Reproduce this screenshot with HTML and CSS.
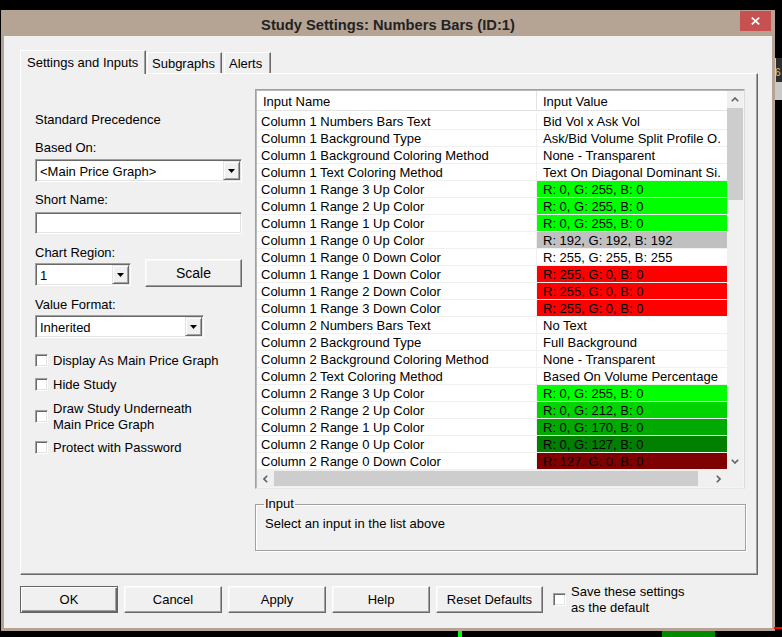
FILE: index.html
```html
<!DOCTYPE html>
<html lang="en">
<head>
<meta charset="utf-8">
<title>Study Settings: Numbers Bars (ID:1)</title>
<link rel="stylesheet" href="styles.css">
</head>
<body>
<div class="chart-bit chart-bit-dark">6</div>
<div class="chart-bit chart-bit-light"></div>
<div class="chart-bit chart-bar-green"></div>
<div class="chart-bit chart-bar-dkgreen"></div>
<div class="chart-bit chart-line-red"></div>

<div class="dialog">
  <div class="titlebar">
    <div class="title">Study Settings: Numbers Bars (ID:1)</div>
    <div class="close"><svg width="9" height="8" viewBox="0 0 9 8"><path d="M0.8 0.6 L8.2 7.4 M8.2 0.6 L0.8 7.4" stroke="#fff" stroke-width="1.7" fill="none"/></svg></div>
  </div>
  <div class="client">
    <div class="tabs">
      <div class="tab tab-active">Settings and Inputs</div>
      <div class="tab tab-sub">Subgraphs</div>
      <div class="tab tab-alerts">Alerts</div>
    </div>
    <div class="panel">
      <div class="leftcol">
        <div class="lbl">Standard Precedence</div>
        <div class="lbl mt12">Based On:</div>
        <div class="combo combo-based mt4"><span class="combo-text">&lt;Main Price Graph&gt;</span><span class="dd"><svg width="7" height="4" viewBox="0 0 7 4"><path d="M0 0H7L3.5 4Z" fill="#000"/></svg></span></div>
        <div class="lbl mt9">Short Name:</div>
        <div class="textbox mt5"></div>
        <div class="lbl mt10">Chart Region:</div>
        <div class="region-row">
          <div class="combo combo-region"><span class="combo-text">1</span><span class="dd"><svg width="7" height="4" viewBox="0 0 7 4"><path d="M0 0H7L3.5 4Z" fill="#000"/></svg></span></div>
          <div class="btn btn-scale">Scale</div>
        </div>
        <div class="lbl mt9">Value Format:</div>
        <div class="combo combo-format mt3"><span class="combo-text">Inherited</span><span class="dd"><svg width="7" height="4" viewBox="0 0 7 4"><path d="M0 0H7L3.5 4Z" fill="#000"/></svg></span></div>
        <div class="check mt14"><span class="box"></span><span class="ctext">Display As Main Price Graph</span></div>
        <div class="check mt8"><span class="box"></span><span class="ctext">Hide Study</span></div>
        <div class="check mt8"><span class="box"></span><span class="ctext">Draw Study Underneath<br>Main Price Graph</span></div>
        <div class="check mt7"><span class="box"></span><span class="ctext">Protect with Password</span></div>
      </div>
      <div class="rightcol">
        <div class="listview">
          <div class="lv-main">
            <div class="lv-head"><span class="hn">Input Name</span><span class="hv">Input Value</span></div>
            <div class="lv-rows">
              <div class="row"><span class="n">Column 1 Numbers Bars Text</span><span class="v">Bid Vol x Ask Vol</span></div>
              <div class="row"><span class="n">Column 1 Background Type</span><span class="v">Ask/Bid Volume Split Profile O.</span></div>
              <div class="row"><span class="n">Column 1 Background Coloring Method</span><span class="v">None - Transparent</span></div>
              <div class="row"><span class="n">Column 1 Text Coloring Method</span><span class="v">Text On Diagonal Dominant Si.</span></div>
              <div class="row"><span class="n">Column 1 Range 3 Up Color</span><span class="v c-g255">R: 0, G: 255, B: 0</span></div>
              <div class="row"><span class="n">Column 1 Range 2 Up Color</span><span class="v c-g255">R: 0, G: 255, B: 0</span></div>
              <div class="row"><span class="n">Column 1 Range 1 Up Color</span><span class="v c-g255">R: 0, G: 255, B: 0</span></div>
              <div class="row"><span class="n">Column 1 Range 0 Up Color</span><span class="v c-gray">R: 192, G: 192, B: 192</span></div>
              <div class="row"><span class="n">Column 1 Range 0 Down Color</span><span class="v">R: 255, G: 255, B: 255</span></div>
              <div class="row"><span class="n">Column 1 Range 1 Down Color</span><span class="v c-red">R: 255, G: 0, B: 0</span></div>
              <div class="row"><span class="n">Column 1 Range 2 Down Color</span><span class="v c-red">R: 255, G: 0, B: 0</span></div>
              <div class="row"><span class="n">Column 1 Range 3 Down Color</span><span class="v c-red">R: 255, G: 0, B: 0</span></div>
              <div class="row"><span class="n">Column 2 Numbers Bars Text</span><span class="v">No Text</span></div>
              <div class="row"><span class="n">Column 2 Background Type</span><span class="v">Full Background</span></div>
              <div class="row"><span class="n">Column 2 Background Coloring Method</span><span class="v">None - Transparent</span></div>
              <div class="row"><span class="n">Column 2 Text Coloring Method</span><span class="v">Based On Volume Percentage</span></div>
              <div class="row"><span class="n">Column 2 Range 3 Up Color</span><span class="v c-g255">R: 0, G: 255, B: 0</span></div>
              <div class="row"><span class="n">Column 2 Range 2 Up Color</span><span class="v c-g212">R: 0, G: 212, B: 0</span></div>
              <div class="row"><span class="n">Column 2 Range 1 Up Color</span><span class="v c-g170">R: 0, G: 170, B: 0</span></div>
              <div class="row"><span class="n">Column 2 Range 0 Up Color</span><span class="v c-g127">R: 0, G: 127, B: 0</span></div>
              <div class="row"><span class="n">Column 2 Range 0 Down Color</span><span class="v c-r127">R: 127, G: 0, B: 0</span></div>
            </div>
            <div class="hscroll">
              <span class="sb-btn"><svg width="5" height="8" viewBox="0 0 5 8"><path d="M4.2 0.8 L1 4 L4.2 7.2" stroke="#606060" stroke-width="1.6" fill="none"/></svg></span>
              <span class="hthumb"></span>
              <span class="htrack"></span>
              <span class="sb-btn"><svg width="5" height="8" viewBox="0 0 5 8"><path d="M0.8 0.8 L4 4 L0.8 7.2" stroke="#606060" stroke-width="1.6" fill="none"/></svg></span>
            </div>
          </div>
          <div class="vscroll">
            <span class="sb-btn vbtn"><svg width="8" height="5" viewBox="0 0 8 5"><path d="M0.8 4.2 L4 1 L7.2 4.2" stroke="#606060" stroke-width="1.6" fill="none"/></svg></span>
            <span class="vthumb"></span>
            <span class="vtrack"></span>
            <span class="sb-btn vbtn"><svg width="8" height="5" viewBox="0 0 8 5"><path d="M0.8 0.8 L4 4 L7.2 0.8" stroke="#606060" stroke-width="1.6" fill="none"/></svg></span>
            <span class="corner"></span>
          </div>
        </div>
        <fieldset class="group">
          <legend>Input</legend>
          <div>Select an input in the list above</div>
        </fieldset>
      </div>
    </div>
    <div class="buttons">
      <div class="btn btn-default">OK</div>
      <div class="btn">Cancel</div>
      <div class="btn">Apply</div>
      <div class="btn">Help</div>
      <div class="btn btn-reset">Reset Defaults</div>
      <div class="check save"><span class="box"></span><span class="ctext">Save these settings<br>as the default</span></div>
    </div>
  </div>
</div>
</body>
</html>
```

FILE: styles.css
```css
* { box-sizing: border-box; }
html, body { margin: 0; padding: 0; }
html { background: #000; overflow: hidden; }
body {
  width: 782px;
  height: 637px;
  background: #000;
  overflow: hidden;
  position: relative;
  font-family: "Liberation Sans", Arial, sans-serif;
  font-size: 13px;
  line-height: 16px;
  color: #000;
}

/* chart fragments visible behind the dialog */
.chart-bit { position: absolute; }
.chart-bit-dark {
  left: 775px; top: 58px; width: 7px; height: 24px;
  background: #2e2e2e; color: #e9c48a; font-size: 10px; line-height: 10px;
  padding: 10px 0 0 0; text-indent: -1px; overflow: hidden;
  border-left: 1px solid #cfcfcf;
}
.chart-bit-light { left: 775px; top: 82px; width: 7px; height: 18px; background: #c9c9c9; }
.chart-bar-green { left: 458px; top: 631px; width: 4px; height: 6px; background: #00ff00; }
.chart-bar-dkgreen { left: 662px; top: 631px; width: 53px; height: 6px; background: #008a00; }
.chart-line-red { left: 774px; top: 627px; width: 8px; height: 2px; background: #ff0000; }

/* dialog frame */
.dialog {
  margin: 10px 0 0 1px;
  width: 774px;
  height: 621px;
  border: 3px solid #b5a494;
  border-top: 0;
  display: flex;
  flex-direction: column;
}
.titlebar {
  height: 26px;
  background: #b5a494;
  display: flex;
  align-items: flex-start;
  padding-left: 32px;
}
.title {
  flex: 1;
  text-align: center;
  font-weight: bold;
  font-size: 14.7px;
  line-height: 17px;
  color: #222;
  padding-top: 7px;
}
.close {
  width: 31px;
  height: 20px;
  margin: 1px 1px 0 0;
  background: #c75050;
  display: flex;
  align-items: center;
  justify-content: center;
}

.client {
  flex: 1;
  background: #f0f0f0;
  padding: 14px 0 0 16px;
}

/* tabs */
.tabs {
  display: flex;
  align-items: flex-end;
  height: 23px;
}
.tab {
  height: 21px;
  background: #f0f0f0;
  border-top: 1px solid #fff;
  border-left: 1px solid #fff;
  border-right: 1px solid #696969;
  box-shadow: inset -1px 0 #a0a0a0;
  padding: 3px 0 0 4px;
  white-space: nowrap;
}
.tab-active {
  position: relative;
  z-index: 1;
  width: 126px;
  height: 24px;
  margin-bottom: -1px;
  padding: 4px 0 0 6px;
  margin-right: 1px;
}
.tab-sub { width: 75px; margin-right: 2px; }
.tab-alerts { width: 47px; }

/* tab page */
.panel {
  width: 738px;
  height: 502px;
  border: 1px solid;
  border-color: #fff #696969 #696969 #fff;
  box-shadow: inset -1px -1px #a0a0a0;
  display: flex;
  align-items: flex-start;
  padding-left: 14px;
}
.leftcol {
  width: 207px;
  margin-right: 13px;
  padding-top: 37px;
  display: flex;
  flex-direction: column;
}
.lbl { height: 16px; padding-top: 1px; white-space: nowrap; }
.mt3 { margin-top: 3px; }
.mt4 { margin-top: 4px; }
.mt5 { margin-top: 5px; }
.mt7 { margin-top: 7px; }
.mt8 { margin-top: 8px; }
.mt9 { margin-top: 9px; }
.mt10 { margin-top: 10px; }
.mt12 { margin-top: 12px; }
.mt14 { margin-top: 14px; }

.combo, .textbox {
  background: #fff;
  border: 1px solid;
  border-color: #a0a0a0 #fff #fff #a0a0a0;
  box-shadow: inset 1px 1px #696969, inset -1px -1px #e3e3e3;
}
.combo {
  height: 23px;
  display: flex;
  align-items: stretch;
}
.combo-text {
  flex: 1;
  padding-left: 4px;
  line-height: 23px;
  white-space: nowrap;
  overflow: hidden;
}
.dd {
  width: 17px;
  margin: 1px 1px 1px 0;
  background: #f0f0f0;
  border: 1px solid;
  border-color: #e3e3e3 #696969 #696969 #e3e3e3;
  box-shadow: inset 1px 1px #fff, inset -1px -1px #a0a0a0;
  display: flex;
  align-items: center;
  justify-content: center;
}
.combo-based { width: 207px; }
.textbox { width: 207px; height: 22px; }
.region-row {
  margin-top: -1px;
  display: flex;
  align-items: flex-start;
  gap: 14px;
}
.combo-region { width: 96px; margin-top: 4px; }
.combo-format { width: 169px; }

.btn {
  width: 98px;
  height: 27px;
  background: #f0f0f0;
  border: 1px solid;
  border-color: #fff #696969 #696969 #fff;
  box-shadow: inset -1px -1px #a0a0a0, inset 1px 1px #f8f8f8;
  text-align: center;
  line-height: 25px;
  white-space: nowrap;
}
.btn-scale { width: 97px; height: 28px; line-height: 26px; font-size: 14px; }
.btn-default {
  border-color: #646464;
  box-shadow: inset 1px 1px #fff, inset -1px -1px #696969, inset -2px -2px #a0a0a0;
}
.btn-reset { width: 107px; }

.check {
  display: flex;
  align-items: center;
  gap: 5px;
  white-space: nowrap;
}
.ctext { padding-top: 1px; margin-bottom: -1px; }
.box {
  width: 13px;
  height: 13px;
  flex: none;
  background: #fff;
  border: 1px solid;
  border-color: #a0a0a0 #fff #fff #a0a0a0;
  box-shadow: inset 1px 1px #696969, inset -1px -1px #e3e3e3;
}

/* list view */
.rightcol {
  width: 491px;
  padding-top: 15px;
  display: flex;
  flex-direction: column;
}
.listview {
  width: 490px;
  height: 400px;
  border: 1px solid;
  border-color: #a0a0a0 #dcdcdc #e8e8e8 #a0a0a0;
  box-shadow: inset 1px 1px #b9b9b9, inset -1px -1px #f4f4f4;
  padding: 1px;
  display: flex;
  background: #fff;
}
.lv-main {
  width: 470px;
  display: flex;
  flex-direction: column;
}
.lv-head {
  height: 20px;
  margin-bottom: 2px;
  display: flex;
  border-bottom: 1px solid #e3e3e3;
  line-height: 21px;
  background: #fff;
}
.hn { width: 280px; padding-left: 6px; border-right: 1px solid #e3e3e3; }
.hv { width: 190px; padding-left: 6px; }
.lv-rows { display: flex; flex-direction: column; }
.row {
  height: 17px;
  display: flex;
  border-bottom: 1px solid #f0f0f0;
  line-height: 18px;
}
.n {
  width: 280px;
  padding-left: 4px;
  border-right: 1px solid #f0f0f0;
  white-space: nowrap;
  overflow: hidden;
}
.v {
  width: 190px;
  padding-left: 6px;
  white-space: nowrap;
  overflow: hidden;
}
.c-g255 { background: #00ff00; }
.c-g212 { background: #00d400; }
.c-g170 { background: #00aa00; }
.c-g127 { background: #007f00; }
.c-gray { background: #c0c0c0; }
.c-red { background: #ff0000; }
.c-r127 { background: #7f0000; }

.hscroll {
  height: 17px;
  display: flex;
  background: #f0f0f0;
}
.sb-btn {
  width: 17px;
  flex: none;
  display: flex;
  align-items: center;
  justify-content: center;
}
.hthumb { width: 424px; margin: 1px 0; background: #cdcdcd; }
.htrack { flex: 1; }
.vscroll {
  width: 16px;
  display: flex;
  flex-direction: column;
  background: #f0f0f0;
}
.vbtn { width: 16px; height: 17px; }
.vthumb { height: 92px; background: #cdcdcd; }
.vtrack { flex: 1; }
.corner { height: 17px; background: #f0f0f0; }

/* group box */
.group {
  margin: 7px 0 0 0;
  width: 491px;
  height: 55px;
  min-inline-size: 0;
  border: 1px solid #a0a0a0;
  box-shadow: inset 1px 1px #fff, 1px 1px #fff;
  padding: 4px 0 0 9px;
}
.group legend {
  padding: 0 1px;
  margin-left: -1px;
  line-height: 16px;
}

/* bottom buttons */
.buttons {
  margin-top: 11px;
  display: flex;
  align-items: flex-start;
  gap: 6px;
}
.save { margin: -3px 0 0 4px; align-items: center; line-height: 16px; }
```
